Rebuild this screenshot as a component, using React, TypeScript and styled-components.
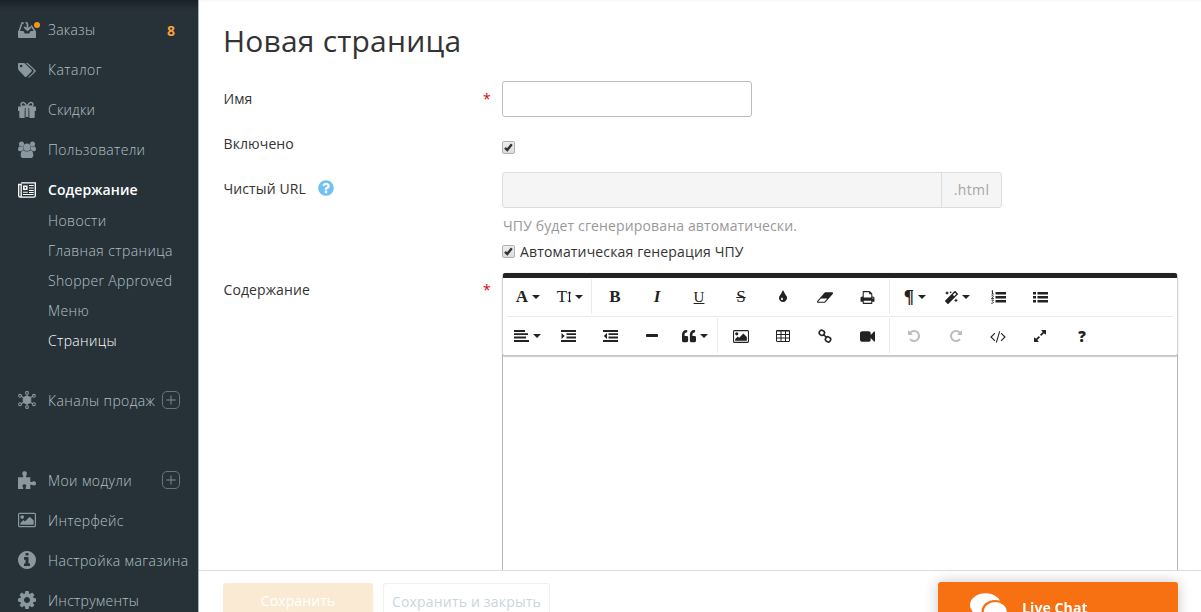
import React from 'react';
import styled, { createGlobalStyle } from 'styled-components';
import { FaMagic, FaQuoteLeft, FaQuestionCircle } from 'react-icons/fa';

const Global = createGlobalStyle`
  * { box-sizing: border-box; }
  body { margin: 0; background: #fff; overflow: hidden; font-family: 'Open Sans', sans-serif; color: #333; }
`;

const Page = styled.div`
  display: flex;
  height: 612px;
  overflow: hidden;
`;

/* ---------- sidebar ---------- */
const Sidebar = styled.nav`
  width: 199px;
  flex: none;
  padding: 10px 0 0 18px;
  background: linear-gradient(#182127, #263238 10px);
  border-right: 1px solid #a9b1b2;
  overflow: hidden;
`;
const NavItem = styled.a<{ $active?: boolean; $gap?: number }>`
  display: flex;
  align-items: center;
  height: 40px;
  margin-top: ${p => p.$gap ?? 0}px;
  color: ${p => (p.$active ? '#fff' : '#b4c0c8')};
  font-size: 14px;
  font-weight: ${p => (p.$active ? 600 : 300)};
  white-space: nowrap;
`;
const NavIcon = styled.span<{ $active?: boolean }>`
  position: relative;
  display: flex;
  width: 18px;
  margin-right: 12px;
  color: ${p => (p.$active ? '#fff' : '#8a979f')};
  svg { display: block; width: 18px; height: 18px; }
`;
const Dot = styled.i`
  position: absolute;
  right: -4px;
  top: 1px;
  width: 6px;
  height: 6px;
  border-radius: 50%;
  background: #f7941d;
`;
const NavText = styled.span<{ $spacing: number; $low?: boolean }>`
  padding-bottom: ${p => (p.$low ? 0 : 2)}px;
  letter-spacing: ${p => p.$spacing}px;
`;
const Count = styled.b`
  margin: 0 23px 0 auto;
  color: #f9a13c;
  font-size: 14px;
  font-weight: 700;
`;
const Plus = styled.span`
  display: flex;
  margin: 0 18px 0 auto;
  color: #68757c;
`;
const SubMenu = styled.div`
  margin: -4px 0 0 30px;
`;
const SubItem = styled.a<{ $active?: boolean; $spacing: number }>`
  display: block;
  height: 30px;
  line-height: 30px;
  font-size: 14px;
  font-weight: 300;
  letter-spacing: ${p => p.$spacing}px;
  color: ${p => (p.$active ? '#fff' : '#b4c0c8')};
  white-space: nowrap;
`;

/* ---------- form ---------- */
const Main = styled.main`
  display: flex;
  flex-direction: column;
  flex: 1;
  min-width: 0;
  background: linear-gradient(#f6f8f8, #fff 3px);
`;
const Content = styled.div`
  height: 570px;
  padding: 20px 0 0 24px;
  overflow: hidden;
`;
const Title = styled.h1`
  margin: 0 0 19px;
  height: 42px;
  line-height: 42px;
  font-size: 30px;
  font-weight: 400;
  letter-spacing: 0.2px;
`;
const Row = styled.div<{ $h: number }>`
  display: flex;
  height: ${p => p.$h}px;
`;
const Label = styled.label<{ $top?: number }>`
  display: flex;
  width: 260px;
  height: 20px;
  flex: none;
  margin-top: ${p => p.$top ?? 8}px;
  padding-left: 0.5px;
  line-height: 20px;
  font-size: 14px;
  letter-spacing: 0.1px;
`;
const Help = styled(FaQuestionCircle)`
  width: 16px;
  height: 16px;
  margin: 1px 0 0 12px;
  color: #6fc0f3;
`;
const Star = styled.span<{ $top?: number }>`
  width: 19px;
  flex: none;
  margin-top: ${p => p.$top ?? 8}px;
  line-height: 20px;
  font-size: 14px;
  color: #d00;
`;
const Input = styled.input`
  width: 250px;
  height: 36px;
  border: 1px solid #bcbcbc;
  border-radius: 3px;
  background: #fff;
`;
const Field = styled.div`
  display: flex;
  flex-direction: column;
`;
const UrlGroup = styled.div`
  display: flex;
  width: 500px;
  height: 36px;
  border: 1px solid #ddd;
  border-radius: 3px;
  background: #f5f5f5;
`;
const UrlSuffix = styled.span`
  width: 60px;
  margin-left: auto;
  border-left: 1px solid #ddd;
  line-height: 34px;
  text-align: center;
  font-size: 14px;
  letter-spacing: 0.4px;
  color: #a5a5a5;
`;
const Hint = styled.div`
  height: 27px;
  margin-top: 4px;
  padding-left: 1px;
  line-height: 27px;
  font-size: 14px;
  letter-spacing: 0.14px;
  color: #999;
  white-space: nowrap;
`;
const CheckLine = styled.label<{ $drop?: boolean }>`
  display: flex;
  align-items: center;
  gap: 5px;
  height: 24px;
  margin-top: ${p => (p.$drop ? 4 : 0)}px;
  font-size: 14px;
  letter-spacing: 0.15px;
  white-space: nowrap;
`;
const CheckBox = styled.span`
  display: flex;
  width: 13px;
  height: 13px;
  flex: none;
  border: 1px solid #b2b2b2;
  border-radius: 2px;
  background: linear-gradient(#eee, #dcdcdc);
`;

/* ---------- editor ---------- */
const Editor = styled.div`
  width: 676px;
`;
const Toolbar = styled.div`
  position: relative;
  height: 82px;
  margin: 1px 1px 0;
  padding: 0 4px;
  border-top: 5px solid #222;
  border-radius: 2px;
  background: #fff;
  box-shadow: 0 1px 3px rgba(0, 0, 0, 0.12), 0 1px 1px 1px rgba(0, 0, 0, 0.16);
`;
const ToolRow = styled.div`
  display: flex;
  height: 38px;
  & + & { border-top: 1px solid #ebebeb; height: 39px; }
`;
const Tool = styled.button<{ $muted?: boolean; $w?: number }>`
  display: flex;
  align-items: center;
  justify-content: center;
  gap: 4px;
  width: ${p => p.$w ?? 42}px;
  padding: 0;
  border: 0;
  background: none;
  color: ${p => (p.$muted ? '#bdbdbd' : '#222')};
`;
const Sep = styled.i<{ $wide?: boolean }>`
  width: 1px;
  margin: 1px ${p => (p.$wide ? 3 : 2)}px 2px ${p => (p.$wide ? 1 : 0)}px;
  background: #ebebeb;
`;
const Caret = styled.i`
  border: 4px solid transparent;
  border-top-color: #222;
  border-bottom: 0;
`;
const Glyph = styled.span<{ $italic?: boolean; $line?: string; $size?: number; $weight?: number; $sans?: boolean }>`
  font-family: ${p => (p.$sans ? "'Open Sans', sans-serif" : "'Liberation Serif', serif")};
  font-size: ${p => p.$size ?? 17}px;
  line-height: 20px;
  font-weight: ${p => p.$weight ?? 700};
  font-style: ${p => (p.$italic ? 'italic' : 'normal')};
  text-decoration: ${p => p.$line ?? 'none'};
  text-decoration-thickness: 1px;
`;
const Canvas = styled.div`
  height: 230px;
  border: 1px solid #b5b5b5;
  border-top: 0;
`;

/* ---------- footer ---------- */
const Footer = styled.footer`
  display: flex;
  gap: 10px;
  height: 42px;
  padding: 12px 0 0 24px;
  border-top: 1px solid #dcdcdc;
  overflow: hidden;
`;
const Action = styled.button<{ $primary?: boolean }>`
  width: ${p => (p.$primary ? 150 : 167)}px;
  height: 38px;
  flex: none;
  padding: 0 0 ${p => (p.$primary ? 3 : 1)}px;
  border: 1px solid ${p => (p.$primary ? '#fbead3' : '#eef0f2')};
  border-radius: 3px;
  background: ${p => (p.$primary ? '#fbead3' : '#fff')};
  color: ${p => (p.$primary ? '#fff' : '#cbd5e0')};
  font: 400 14px 'Open Sans', sans-serif;
  letter-spacing: ${p => (p.$primary ? 0.1 : 0.18)}px;
  white-space: nowrap;
`;
const Chat = styled.div`
  position: fixed;
  left: 938px;
  top: 582px;
  display: flex;
  width: 240px;
  height: 50px;
  padding: 11px 0 0 32px;
  border-radius: 3px 3px 0 0;
  background: #f77012;
  box-shadow: 0 0 14px rgba(0, 0, 0, 0.22);
  color: #fff;
  font-size: 14px;
  font-weight: 700;
`;
const ChatText = styled.span`
  margin: 5px 0 0 15px;
  line-height: 20px;
  letter-spacing: 0.1px;
`;

/* ---------- icons ---------- */
const Svg = ({ d, box = '0 0 1792 1792', w = 14, h = 14, flip = false }: { d: string; box?: string; w?: number; h?: number; flip?: boolean }) => (
  <svg width={w} height={h} viewBox={box} fill="currentColor" transform={flip ? 'scale(-1 1)' : undefined}>
    <path d={d} />
  </svg>
);
const paths = {
  news: 'M1024 512h-384v384h384v-384zm128 640v128h-640v-128h640zm0-768v640h-640v-640h640zm640 768v128h-512v-128h512zm0-256v128h-512v-128h512zm0-256v128h-512v-128h512zm0-256v128h-512v-128h512zm-1536 960v-960h-128v960q0 26 19 45t45 19 45-19 19-45zm1664 0v-1088h-1536v1088q0 33-11 64h1483q26 0 45-19t19-45zm128-1216v1216q0 80-56 136t-136 56h-1664q-80 0-136-56t-56-136v-1088h256v-128h1792z',
  image: 'M576 576q0 80-56 136t-136 56-136-56-56-136 56-136 136-56 136 56 56 136zm1024 384v448h-1408v-192l320-320 160 160 512-512zm96-704h-1600q-13 0-22.5 9.5t-9.5 22.5v1216q0 13 9.5 22.5t22.5 9.5h1600q13 0 22.5-9.5t9.5-22.5v-1216q0-13-9.5-22.5t-22.5-9.5zm160 32v1216q0 66-47 113t-113 47h-1600q-66 0-113-47t-47-113v-1216q0-66 47-113t113-47h1600q66 0 113 47t47 113z',
  info: 'M1152 1376v-160q0-14-9-23t-23-9h-96v-512q0-14-9-23t-23-9h-320q-14 0-23 9t-9 23v160q0 14 9 23t23 9h96v320h-96q-14 0-23 9t-9 23v160q0 14 9 23t23 9h448q14 0 23-9t9-23zm-128-896v-160q0-14-9-23t-23-9h-192q-14 0-23 9t-9 23v160q0 14 9 23t23 9h192q14 0 23-9t9-23zm640 416q0 209-103 385.5t-279.5 279.5-385.5 103-385.5-103-279.5-279.5-103-385.5 103-385.5 279.5-279.5 385.5-103 385.5 103 279.5 279.5 103 385.5z',
  cog: 'M1152 896q0-106-75-181t-181-75-181 75-75 181 75 181 181 75 181-75 75-181zm512-109v222q0 12-8 23t-20 13l-185 28q-19 54-39 91 35 50 107 138 10 12 10 25t-9 23q-27 37-99 108t-94 71q-12 0-26-9l-138-108q-44 23-91 38-16 136-29 186-7 28-36 28h-222q-14 0-24.5-8.5t-11.5-21.5l-28-184q-49-16-90-37l-141 107q-10 9-25 9-14 0-25-11-126-114-165-168-7-10-7-23 0-12 8-23 15-21 51-66.5t54-70.5q-27-50-41-99l-183-27q-13-2-21-12.5t-8-23.5v-222q0-12 8-23t19-13l186-28q14-46 39-92-40-57-107-138-10-12-10-24 0-10 9-23 26-36 98.5-107.5t94.5-71.5q13 0 26 10l138 107q44-23 91-38 16-136 29-186 7-28 36-28h222q14 0 24.5 8.5t11.5 21.5l28 184q49 16 90 37l142-107q9-9 24-9 13 0 25 10 129 119 165 170 7 8 7 22 0 12-8 23-15 21-51 66.5t-54 70.5q26 50 41 98l183 28q13 2 21 12.5t8 23.5z',
  tint: 'M896 1152q0-36-20-69-1-1-15.5-22.5t-25.5-38-25-44-21-50.5q-4-16-21-16t-21 16q-7 23-21 50.5t-25 44-25.5 38-15.5 22.5q-20 33-20 69 0 53 37.5 90.5t90.5 37.5 90.5-37.5 37.5-90.5zm512-128q0 212-150 362t-362 150-362-150-150-362q0-145 81-275 6-9 62.5-90.5t101-151 99.5-178 83-201.5q9-30 34-47t51-17 51.5 17 33.5 47q28 93 83 201.5t99.5 178 101 151 62.5 90.5q81 127 81 275z',
  eraser: 'M832 1408l336-384h-768l-336 384h768zm1013-1077q15 34 9.5 71.5t-30.5 65.5l-896 1024q-38 44-96 44h-768q-38 0-69.5-20.5t-47.5-54.5q-15-34-9.5-71.5t30.5-65.5l896-1024q38-44 96-44h768q38 0 69.5 20.5t47.5 54.5z',
  print: 'M448 1536h896v-256h-896v256zm0-640h896v-384h-160q-40 0-68-28t-28-68v-160h-640v640zm1152 64q0-26-19-45t-45-19-45 19-19 45 19 45 45 19 45-19 19-45zm128 0v416q0 13-9.5 22.5t-22.5 9.5h-224v160q0 40-28 68t-68 28h-960q-40 0-68-28t-28-68v-160h-224q-13 0-22.5-9.5t-9.5-22.5v-416q0-79 56.5-135.5t135.5-56.5h64v-544q0-40 28-68t68-28h672q40 0 88 20t76 48l152 152q28 28 48 76t20 88v256h64q79 0 135.5 56.5t56.5 135.5z',
  video: 'M1792 352v1088q0 42-39 59-13 5-25 5-27 0-45-19l-403-403v166q0 119-84.5 203.5t-203.5 84.5h-704q-119 0-203.5-84.5t-84.5-203.5v-704q0-119 84.5-203.5t203.5-84.5h704q119 0 203.5 84.5t84.5 203.5v165l403-402q18-19 45-19 12 0 25 5 39 17 39 59z',
  undo: 'M1664 896q0 156-61 298t-164 245-245 164-298 61q-172 0-327-72.5t-264-204.5q-7-10-6.5-22.5t8.5-20.5l137-138q10-9 25-9 16 2 23 12 73 95 179 147t225 52q104 0 198.5-40.5t163.5-109.5 109.5-163.5 40.5-198.5-40.5-198.5-109.5-163.5-163.5-109.5-198.5-40.5q-98 0-188 35.5t-160 101.5l137 138q31 30 14 69-17 40-59 40h-448q-26 0-45-19t-19-45v-448q0-42 40-59 39-17 69 14l130 129q107-101 244.5-156.5t284.5-55.5q156 0 298 61t245 164 164 245 61 298z',
  code: 'M553 1399l-50 50q-10 10-23 10t-23-10l-466-466q-10-10-10-23t10-23l466-466q10-10 23-10t23 10l50 50q10 10 10 23t-10 23l-393 393 393 393q10 10 10 23t-10 23zm591-1067l-373 1291q-4 13-15.5 19.5t-23.5 2.5l-62-17q-13-4-19.5-15.5t-2.5-24.5l373-1291q4-13 15.5-19.5t23.5-2.5l62 17q13 4 19.5 15.5t2.5 24.5zm657 651l-466 466q-10 10-23 10t-23-10l-50-50q-10-10-10-23t10-23l393-393-393-393q-10-10-10-23t10-23l50-50q10-10 23-10t23 10l466 466q10 10 10 23t-10 23z',
  expand: 'M883 1056q0 13-10 23l-332 332 144 144q19 19 19 45t-19 45-45 19h-448q-26 0-45-19t-19-45v-448q0-26 19-45t45-19 45 19l144 144 332-332q10-10 23-10t23 10l114 114q10 10 10 23zm781-864v448q0 26-19 45t-45 19-45-19l-144-144-332 332q-10 10-23 10t-23-10l-114-114q-10-10-10-23t10-23l332-332-144-144q-19-19-19-45t19-45 45-19h448q26 0 45 19t19 45z',
};
const NewsIcon = () => (
  <svg viewBox="0 0 18 18" fill="none" stroke="currentColor">
    <path d="M3.200 1.800h14.100v13q0 1.400-1.400 1.400H2.100Q.700 16.200.700 14.800V3.500h2.500v11.300q0 1.400-1.200 1.400" strokeWidth="1.300" />
    <path d="M5.800 5.200h3v3h-3z" strokeWidth="1.600" />
    <path d="M11 4.500h4.700M11 7h4.700M11 9.500h4.700M5 11.300h4.800M5 13.500h10.700M11 11.500h4.700" strokeWidth="1.100" />
  </svg>
);
const InboxIcon = () => (
  <svg viewBox="0 0 18 18" fill="none" stroke="currentColor">
    <path d="M5.800 2H4L1 10.500M13.200 4.500L17 10.500" strokeWidth="1.500" />
    <path d="M0 10h5.500l1.200 2.500h4.600l1.200-2.500H18v6.200q0 .8-.8.8H.8q-.8 0-.8-.8z" fill="currentColor" stroke="none" />
    <path d="M7.500 1.500c1.800 0 2 .8 2 2.500v4.500M6.200 6l3.300 3 3.300-3" strokeWidth="1.700" />
  </svg>
);
const TagsIcon = () => (
  <svg viewBox="0 0 18 18" fill="currentColor">
    <path fillRule="evenodd" d="M0 2.800Q0 2 .8 2h4.700q.9 0 1.500.6l6.600 6.500q.7.700 0 1.500l-5.200 5.200q-.8.700-1.500 0L.7 9.200Q0 8.500 0 7.600zM3.100 3.700a1.300 1.300 0 1 0 0 2.600 1.300 1.300 0 0 0 0-2.600z" />
    <path d="M7.800 2h1.100q.9 0 1.500.6l7 6.600q.8.700 0 1.500l-5.700 5.600q-.7.600-1.500 0l4.900-4.900q1.300-1.400 0-2.800z" />
  </svg>
);
const GiftIcon = () => (
  <svg viewBox="0 0 18 18" fill="currentColor">
    <path d="M.6 5.500H17.400q.6 0 .6.600V10H0V6.100q0-.6.600-.6zM1.300 10H6.800v7H2.300q-1 0-1-1zM11.200 10h5.500v6q0 1-1 1h-4.500z" />
    <path d="M6.800 7h4.400v10H6.800z" fill="#263238" />
    <path d="M7.600 6.500h2.800V16H7.600z" />
    <path d="M9 6C7.500 2 6.200 1.500 5 1.500c-2.600 0-2.600 3.800 0 3.800H13c2.600 0 2.600-3.800 0-3.800C11.800 1.500 10.500 2 9 6z" fill="none" stroke="currentColor" strokeWidth="1.400" />
  </svg>
);
const UsersIcon = () => (
  <svg viewBox="0 0 18 18" fill="currentColor">
    <circle cx="3.500" cy="3" r="2.500" />
    <circle cx="14.500" cy="3" r="2.500" />
    <path d="M1.600 5.200Q3.300 6.300 5 5.300 4.600 7.300 5.700 9q-1.500.1-2.500 1.200H1.800Q0 10.200 0 8.500 0 5.400 1.600 5.200zM16.400 5.200Q14.700 6.300 13 5.300q.4 2-.7 3.700 1.500.1 2.500 1.200h1.400Q18 10.200 18 8.500q0-3.100-1.600-3.300z" />
    <circle cx="9" cy="6.200" r="3.700" />
    <path d="M5.600 9.200Q9 12 12.400 9.200q2.900.5 2.900 5 0 2.800-2.700 2.800H5.400q-2.700 0-2.700-2.800 0-4.500 2.900-5z" />
  </svg>
);
const PuzzleIcon = () => (
  <svg viewBox="0 0 18 18" fill="currentColor">
    <path d="M0 6.200h4.900c.5-.6.3-1.300-.1-1.900C3.600 2.200 4.600.2 6.600.2s3 2 1.800 4.100c-.4.600-.6 1.300-.1 1.900H12.300v4.600c.6.500 1.300.3 2-.1C16.200 9.700 18 10.500 18 12.400s-1.800 2.700-3.700 1.700c-.7-.4-1.400-.6-2-.1V18H7.900c-.6-.6-.3-1.300.1-2 .8-1.600-.1-2.700-1.600-2.700s-2.400 1.100-1.600 2.700c.4.700.7 1.400.1 2H0z" />
  </svg>
);
const HubIcon = () => (
  <svg viewBox="0 0 18 18" fill="none" stroke="currentColor" strokeWidth="1.1">
    <circle cx="9" cy="9" r="3.800" fill="currentColor" />
    <path d="M9 3v12M3 5l12 8M3 13l12-8" />
    {[[9, 1.9], [9, 16.1], [2.1, 4.8], [15.9, 4.8], [2.1, 13.2], [15.9, 13.2]].map(([x, y]) => (
      <circle key={`${x}-${y}`} cx={x} cy={y} r="1.400" fill="#263238" />
    ))}
  </svg>
);
const PlusIcon = () => (
  <svg width="18" height="18" viewBox="0 0 18 18" fill="none" stroke="currentColor">
    <rect x=".5" y=".5" width="17" height="17" rx="4.500" />
    <path d="M9 4.500v9M4.500 9h9" strokeWidth="1.300" />
  </svg>
);
const Tick = () => (
  <svg width="11" height="11" viewBox="0 0 11 11" fill="none" stroke="#333" strokeWidth="2.400">
    <path d="M2 5.800l2.300 2.200L8.800 2.200" />
  </svg>
);
const AlignIcon = () => (
  <svg width="15" height="12" viewBox="0 0 15 12" fill="currentColor">
    <path d="M0 0h11v2H0zM0 3.300h14v1.800H0zM0 6.600h12v1.800H0zM0 10h15v2H0z" />
  </svg>
);
const IndentIcon = ({ out = false }: { out?: boolean }) => (
  <svg width="15" height="12" viewBox="0 0 15 12" fill="currentColor">
    <path d="M0 0h15v2H0zM5.500 3.300H15v1.800H5.500zM5.500 6.600H15v1.800H5.500zM0 10h15v2H0z" />
    <path d={out ? 'M4 3v6L.8 6z' : 'M.5 3v6l3.200-3z'} />
  </svg>
);
const ListIcon = ({ numbered = false }: { numbered?: boolean }) => (
  <svg width="15" height="14" viewBox="0 0 15 14" fill="currentColor">
    <path d="M4.500 2H15v2.500H4.500zM4.500 6H15v2.500H4.500zM4.500 10H15v2.500H4.500z" />
    {numbered ? (
      <path d="M1.500.5v3.500M.5 4h2.300M.6 1.200l1-.7M.5 6q2-1 2 .3L.5 8.500h2.300M.5 10h2L1.500 11.300q2 .7 0 2H.3" fill="none" stroke="currentColor" strokeWidth=".9" />
    ) : (
      <path d="M0 2h3v2.500H0zM0 6h3v2.500H0zM0 10h3v2.500H0z" />
    )}
  </svg>
);
const TableIcon = () => (
  <svg width="14" height="12" viewBox="0 0 14 12" fill="none" stroke="currentColor">
    <rect x=".5" y=".5" width="13" height="11" rx=".5" />
    <path d="M0 1h14M0 4.500h14M0 8h14M5 1v11M9.500 1v11" />
  </svg>
);
const LinkIcon = () => (
  <svg width="14" height="14" viewBox="0 0 14 14" fill="none" stroke="currentColor" strokeWidth="1.600">
    <rect x="1.200" y="1.500" width="5.200" height="4.800" rx="2.200" transform="rotate(30 4 4)" />
    <rect x="7.600" y="7.900" width="5.200" height="4.800" rx="2.200" transform="rotate(30 10 10)" />
    <path d="M5 5l4 4" />
  </svg>
);
const MinusIcon = () => (
  <svg width="12" height="14" viewBox="0 0 12 14" fill="currentColor"><rect y="5" width="12" height="3" rx=".7" /></svg>
);
const HeightIcon = () => (
  <svg width="4" height="12" viewBox="0 0 4 12" fill="none" stroke="currentColor"><path d="M2.500 1v10" strokeWidth="1.200" /><path d="M1 2.600L2.500.8 4 2.600M1 9.400l1.500 1.800L4 9.400" /></svg>
);
const ChatIcon = () => (
  <svg width="37" height="30" viewBox="0 0 37 30">
    <ellipse cx="15.500" cy="12" rx="15.500" ry="11.700" fill="#fff" />
    <ellipse cx="25" cy="18.500" rx="13.500" ry="11.500" fill="#f77012" />
    <ellipse cx="25.300" cy="19" rx="11.500" ry="10" fill="#fff" />
  </svg>
);
const SizeGlyph = styled.span`
  display: flex;
  align-items: center;
`;

export default function App() {
  return (
    <>
      <Global />
      <Page>
        <Sidebar>
          <NavItem><NavIcon><InboxIcon /><Dot /></NavIcon><NavText $spacing={0.3}>Заказы</NavText><Count>8</Count></NavItem>
          <NavItem><NavIcon><TagsIcon /></NavIcon><NavText $spacing={0.45}>Каталог</NavText></NavItem>
          <NavItem><NavIcon><GiftIcon /></NavIcon><NavText $spacing={0.2}>Скидки</NavText></NavItem>
          <NavItem><NavIcon><UsersIcon /></NavIcon><NavText $spacing={0.3}>Пользователи</NavText></NavItem>
          <NavItem $active><NavIcon $active><NewsIcon /></NavIcon><NavText $spacing={0.08}>Содержание</NavText></NavItem>
          <SubMenu>
            <SubItem $spacing={0.4}>Новости</SubItem>
            <SubItem $spacing={0.4}>Главная страница</SubItem>
            <SubItem $spacing={0.35}>Shopper Approved</SubItem>
            <SubItem $spacing={0.4}>Меню</SubItem>
            <SubItem $spacing={0.35} $active>Страницы</SubItem>
          </SubMenu>
          <NavItem $gap={24}><NavIcon><HubIcon /></NavIcon><NavText $low $spacing={0.4}>Каналы продаж</NavText><Plus><PlusIcon /></Plus></NavItem>
          <NavItem $gap={40}><NavIcon><PuzzleIcon /></NavIcon><NavText $low $spacing={0.4}>Мои модули</NavText><Plus><PlusIcon /></Plus></NavItem>
          <NavItem><NavIcon><Svg d={paths.image} box="-64 0 1920 1792" /></NavIcon><NavText $low $spacing={0.3}>Интерфейс</NavText></NavItem>
          <NavItem><NavIcon><Svg d={paths.info} box="128 128 1536 1536" /></NavIcon><NavText $low $spacing={0.38}>Настройка магазина</NavText></NavItem>
          <NavItem><NavIcon><Svg d={paths.cog} box="128 128 1536 1536" /></NavIcon><NavText $low $spacing={0.25}>Инструменты</NavText></NavItem>
        </Sidebar>
        <Main>
          <Content>
            <Title>Новая страница</Title>
            <Row $h={50}><Label>Имя</Label><Star>*</Star><Input /></Row>
            <Row $h={41}><Label $top={3}>Включено</Label><Star /><CheckLine $drop><CheckBox><Tick /></CheckBox></CheckLine></Row>
            <Row $h={100}>
              <Label $top={7}>Чистый URL<Help /></Label><Star />
              <Field>
                <UrlGroup><UrlSuffix>.html</UrlSuffix></UrlGroup>
                <Hint>ЧПУ будет сгенерирована автоматически.</Hint>
                <CheckLine><CheckBox><Tick /></CheckBox>Автоматическая генерация ЧПУ</CheckLine>
              </Field>
            </Row>
            <Row $h={320}>
              <Label>Содержание</Label><Star>*</Star>
              <Editor>
                <Toolbar>
                  <ToolRow>
                    <Tool><Glyph>A</Glyph><Caret /></Tool>
                    <Tool><SizeGlyph><Glyph $weight={400}>T</Glyph><HeightIcon /></SizeGlyph><Caret /></Tool>
                    <Sep />
                    <Tool><Glyph>B</Glyph></Tool>
                    <Tool><Glyph $italic>I</Glyph></Tool>
                    <Tool><Glyph $line="underline" $size={15} $weight={400}>U</Glyph></Tool>
                    <Tool><Glyph $line="line-through" $weight={400}>S</Glyph></Tool>
                    <Tool><Svg d={paths.tint} /></Tool>
                    <Tool><Svg d={paths.eraser} box="-64 0 1920 1792" w={16} h={15} /></Tool>
                    <Tool><Svg d={paths.print} w={15} h={15} /></Tool>
                    <Sep $wide />
                    <Tool $w={44}><Glyph $size={19}>¶</Glyph><Caret /></Tool>
                    <Tool $w={40}><FaMagic size={13} /><Caret /></Tool>
                    <Tool><ListIcon numbered /></Tool>
                    <Tool><ListIcon /></Tool>
                  </ToolRow>
                  <ToolRow>
                    <Tool $w={40}><AlignIcon /><Caret /></Tool>
                    <Tool><IndentIcon /></Tool>
                    <Tool><IndentIcon out /></Tool>
                    <Tool><MinusIcon /></Tool>
                    <Tool $w={44}><FaQuoteLeft size={14} /><Caret /></Tool>
                    <Sep />
                    <Tool><Svg d={paths.image} box="-64 0 1920 1792" w={16} h={15} /></Tool>
                    <Tool><TableIcon /></Tool>
                    <Tool><LinkIcon /></Tool>
                    <Tool><Svg d={paths.video} w={15} h={15} /></Tool>
                    <Sep $wide />
                    <Tool $muted><Svg d={paths.undo} /></Tool>
                    <Tool $muted><Svg d={paths.undo} flip /></Tool>
                    <Tool><Svg d={paths.code} box="-64 0 1920 1792" w={16} h={15} /></Tool>
                    <Tool><Svg d={paths.expand} /></Tool>
                    <Tool><Glyph $sans $size={15} $weight={800}>?</Glyph></Tool>
                  </ToolRow>
                </Toolbar>
                <Canvas />
              </Editor>
            </Row>
          </Content>
          <Footer>
            <Action $primary>Сохранить</Action>
            <Action>Сохранить и закрыть</Action>
          </Footer>
        </Main>
      </Page>
      <Chat><ChatIcon /><ChatText>Live Chat</ChatText></Chat>
    </>
  );
}
